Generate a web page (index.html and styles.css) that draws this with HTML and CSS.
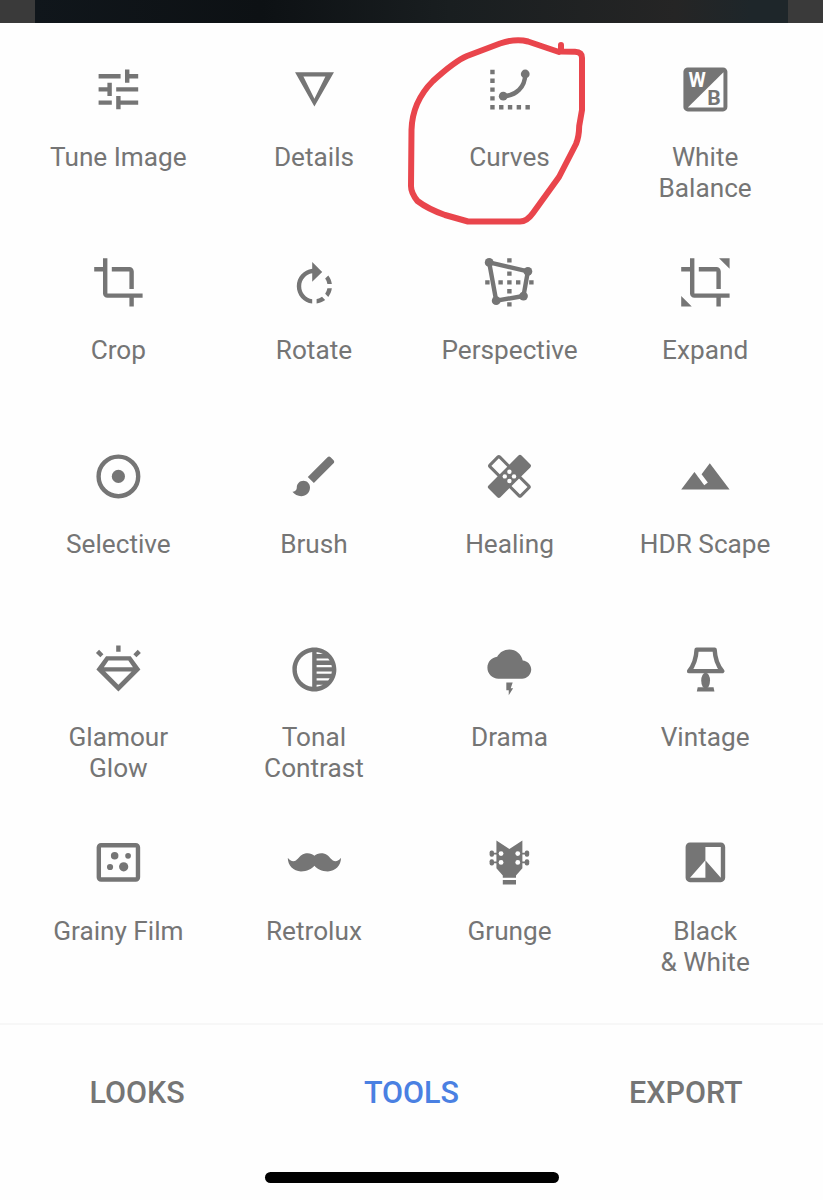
FILE: index.html
```
<!DOCTYPE html>
<html lang="en">
<head>
    <meta charset="UTF-8">
    <meta name="viewport" content="width=device-width, initial-scale=1.0">
    <title>Photo Editor - Tools</title>
    <link rel="stylesheet" href="styles.css">
</head>
<body>
    <div class="app">
        <div class="photo-strip"><div class="photo"></div></div>

        <div class="tools">
            <div class="tool">
                <svg class="icon" viewBox="0 0 24 24"><path d="M3 17v2h6v-2H3zM3 5v2h10V5H3zm10 16v-2h8v-2h-8v-2h-2v6h2zM7 9v2H3v2h4v2h2V9H7zm14 4v-2H11v2h10zm-6-4h2V7h4V5h-4V3h-2v6z"/></svg>
                <div class="label">Tune Image</div>
            </div>
            <div class="tool">
                <svg class="icon" viewBox="0 0 24 24"><path fill-rule="evenodd" d="M3.2 4.2h17.7L12 19.8zM7 6.1l5 10.1 5-10.1z"/></svg>
                <div class="label">Details</div>
            </div>
            <div class="tool">
                <svg class="icon" viewBox="0 0 24 24">
                    <path class="line dots" d="M4.3 3.1v18M7.3 20.1h15"/>
                    <path class="line" d="M9.2 15.1C15 14.9 19.2 11 19.2 5"/>
                    <circle cx="9.2" cy="15.1" r="2"/><circle cx="19.2" cy="5" r="2"/>
                </svg>
                <div class="label">Curves</div>
            </div>
            <div class="tool">
                <svg class="icon" viewBox="0 0 24 24">
                    <rect x="2" y="2" width="20" height="20" rx="2"/>
                    <path class="paper" d="M20.2 4.2v16H4z"/>
                    <text class="paper wb" x="8.2" y="10.9" font-size="9">W</text>
                    <text class="wb" x="15.9" y="19.1" font-size="9.6">B</text>
                </svg>
                <div class="label">White<br>Balance</div>
            </div>

            <div class="tool">
                <svg class="icon" viewBox="0 0 24 24"><path d="M17 15h2V7c0-1.1-.9-2-2-2H9v2h8v8zM7 17V1H5v4H1v2h4v10c0 1.1.9 2 2 2h10v4h2v-4h4v-2H7z"/></svg>
                <div class="label">Crop</div>
            </div>
            <div class="tool">
                <svg class="icon" viewBox="0 0 24 24"><path transform="translate(0 1.7)" d="M15.55 5.55L11 1v3.07C7.06 4.56 4 7.92 4 12s3.05 7.44 7 7.93v-2.02c-2.84-.48-5-2.94-5-5.91s2.16-5.43 5-5.91V10l4.55-4.45zM19.93 11c-.17-1.39-.72-2.73-1.62-3.89l-1.42 1.42c.54.75.88 1.6 1.02 2.47h2.02zM13 17.9v2.02c1.39-.17 2.74-.71 3.9-1.61l-1.44-1.44c-.75.54-1.59.89-2.46 1.03zm3.89-2.42l1.42 1.41c.9-1.16 1.45-2.5 1.62-3.89h-2.02c-.14.87-.48 1.72-1.02 2.48z"/></svg>
                <div class="label">Rotate</div>
            </div>
            <div class="tool">
                <svg class="icon" viewBox="0 0 24 24">
                    <path d="M11 1h2v2h-2zM11 7h2v2h-2zM11 11h2v2h-2zM11 15h2v2h-2zM11 21h2v2h-2zM1 11h2v2H1zM7 11h2v2H7zM15 11h2v2h-2zM21 11h2v2h-2z"/>
                    <path class="line" d="M2.8 2.9L20.4 7l-2 11.2L6 20.3z"/>
                    <circle cx="2.8" cy="2.9" r="2"/><circle cx="20.4" cy="7" r="2"/><circle cx="18.4" cy="18.2" r="2"/><circle cx="6" cy="20.3" r="2"/>
                </svg>
                <div class="label">Perspective</div>
            </div>
            <div class="tool">
                <svg class="icon" viewBox="0 0 24 24"><path d="M17 15h2V7c0-1.1-.9-2-2-2H9v2h8v8zM7 17V1H5v4H1v2h4v10c0 1.1.9 2 2 2h10v4h2v-4h4v-2H7zM18.2 1H23v4.8zM1 18.2V23h4.8z"/></svg>
                <div class="label">Expand</div>
            </div>

            <div class="tool">
                <svg class="icon" viewBox="0 0 24 24"><circle class="line" cx="12" cy="12" r="9"/><circle cx="12" cy="12" r="3"/></svg>
                <div class="label">Selective</div>
            </div>
            <div class="tool">
                <svg class="icon" viewBox="0 0 24 24"><path d="M7 14c-1.66 0-3 1.34-3 3 0 1.31-1.16 2-2 2 .92 1.22 2.49 2 4 2 2.21 0 4-1.79 4-4 0-1.66-1.34-3-3-3zm13.71-9.37l-1.34-1.34c-.39-.39-1.02-.39-1.41 0L9 12.25 11.75 15l8.96-8.96c.39-.39.39-1.02 0-1.41z"/></svg>
                <div class="label">Brush</div>
            </div>
            <div class="tool">
                <svg class="icon" viewBox="0 0 24 24">
                    <rect class="line thin" x="2.1" y="8.9" width="19.8" height="6.2" rx=".5" transform="rotate(45 12 12)"/>
                    <rect x="1.4" y="8.2" width="21.2" height="7.6" rx="1" transform="rotate(-45 12 12)"/>
                    <g class="paper"><circle cx="12" cy="9.9" r="1"/><circle cx="9.9" cy="12" r="1"/><circle cx="14.1" cy="12" r="1"/><circle cx="12" cy="14.1" r="1"/></g>
                </svg>
                <div class="label">Healing</div>
            </div>
            <div class="tool">
                <svg class="icon" viewBox="0 0 24 24"><path d="M14 6l-3.75 5 2.85 3.8-1.6 1.2C9.81 13.75 7 10 7 10l-6 8h22L14 6z"/></svg>
                <div class="label">HDR Scape</div>
            </div>

            <div class="tool">
                <svg class="icon" viewBox="0 0 24 24">
                    <path fill-rule="evenodd" d="M6.4 6h11.2L22 12 12 22 2 12zM7.5 8l-2.1 3h13.2l-2.1-3zM6 13l6 6 6-6z"/>
                    <path class="line" d="M12 1.1V4M2.5 3.8l2 2M21.5 3.8l-2 2"/>
                </svg>
                <div class="label">Glamour<br>Glow</div>
            </div>
            <div class="tool">
                <svg class="icon" viewBox="0 0 24 24"><path d="M12 2C6.48 2 2 6.48 2 12s4.48 10 10 10 10-4.48 10-10S17.52 2 12 2zm-1 17.93c-3.94-.49-7-3.85-7-7.93s3.05-7.44 7-7.93v15.86zm2-15.86c1.03.13 2 .45 2.87.93H13v-.93zM13 7h5.24c.25.31.48.65.68 1H13V7zm0 3h6.74c.08.33.15.66.19 1H13v-1zm0 9.93V19h2.87c-.87.48-1.84.8-2.87.93zM18.24 17H13v-1h5.92c-.2.35-.43.69-.68 1zm1.5-3H13v-1h6.93c-.04.34-.11.67-.19 1z"/></svg>
                <div class="label">Tonal<br>Contrast</div>
            </div>
            <div class="tool">
                <svg class="icon" viewBox="0 0 24 24">
                    <path transform="translate(2 -.4) scale(.83)" d="M19.35 10.04C18.67 6.59 15.64 4 12 4 9.11 4 6.6 5.64 5.35 8.04 2.34 8.36 0 10.91 0 14c0 3.31 2.69 6 6 6h13c2.76 0 5-2.24 5-5 0-2.64-2.05-4.78-4.65-4.96z"/>
                    <path d="M10.6 17.9h2.9l-.9 2.7h1.1l-2 3.1v-2.2h-1.1z"/>
                </svg>
                <div class="label">Drama</div>
            </div>
            <div class="tool">
                <svg class="icon" viewBox="0 0 24 24">
                    <path class="line round" d="M8 3h8.2c.2 4 1.3 7.2 3.5 9.8H4.6C6.7 10.2 7.8 7 8 3z"/>
                    <ellipse cx="12.1" cy="17.1" rx="2" ry="3.6"/>
                    <path d="M8.5 20.1h7.2l.4 1.9H8.1z"/>
                </svg>
                <div class="label">Vintage</div>
            </div>

            <div class="tool">
                <svg class="icon" viewBox="0 0 24 24">
                    <rect class="line" x="3.1" y="4.2" width="17.8" height="15.6" rx="1"/>
                    <circle cx="10.3" cy="9" r="1.7"/><circle cx="16.4" cy="9" r="1.3"/><circle cx="8.2" cy="14.1" r="1.4"/><circle cx="14.4" cy="14" r="2.1"/>
                </svg>
                <div class="label">Grainy Film</div>
            </div>
            <div class="tool">
                <svg class="icon" viewBox="0 0 24 24"><path d="M12 9C13.1 8 14.8 7.6 16.600 8.100c1.800.5 2.500 2.100 3.800 3 1.200.8 2.700.2 3.700-1.200 0 3.500-2.600 6.200-6 6.200-2.800 0-4.800-1.100-6.100-2.600-1.300 1.500-3.300 2.600-6.100 2.600-3.400 0-6-2.700-6-6.200 1 1.400 2.500 2 3.700 1.200 1.300-.9 2-2.500 3.800-3C9.200 7.600 10.900 8 12 9z"/></svg>
                <div class="label">Retrolux</div>
            </div>
            <div class="tool">
                <svg class="icon" viewBox="0 0 24 24">
                    <path d="M6.1 2L12 5.9 17.9 2v12.7L15 18v1H9v-1l-2.9-3.3zM9 20h6v2H9zM4 7.6h16v.8H4zM4 11.6h16v.8H4z"/>
                    <rect x="3" y="6.6" width="2" height="2.8" rx=".9"/><rect x="3" y="10.6" width="2" height="2.8" rx=".9"/>
                    <rect x="19" y="6.6" width="2" height="2.8" rx=".9"/><rect x="19" y="10.6" width="2" height="2.8" rx=".9"/>
                    <g class="paper"><circle cx="8.2" cy="8" r="1.1"/><circle cx="15.8" cy="8" r="1.1"/><circle cx="8.2" cy="12" r="1.1"/><circle cx="15.8" cy="12" r="1.1"/></g>
                </svg>
                <div class="label">Grunge</div>
            </div>
            <div class="tool">
                <svg class="icon" viewBox="0 0 24 24"><path d="M19 3H5c-1.1 0-2 .9-2 2v14c0 1.1.9 2 2 2h14c1.1 0 2-.9 2-2V5c0-1.1-.9-2-2-2zm0 16l-7-8v8H5l7-8V5h7v14z"/></svg>
                <div class="label">Black<br>&amp; White</div>
            </div>
        </div>

        <div class="tabs">
            <div class="tab">LOOKS</div>
            <div class="tab active">TOOLS</div>
            <div class="tab">EXPORT</div>
        </div>
        <div class="home-bar"></div>

        <!-- hand drawn ring around Curves -->
        <svg class="marker" viewBox="0 0 190 200">
            <path d="M159 32L128 21.5Q116 18 100 23.500L67 36Q55 41 33 61C18 76 12 92 11.5 110L11 166Q11 173 17.5 181Q28 189 45 195L68 201.5H120Q127 201.5 133 193L159 157L176 124Q179 117 179.2 106L182 90V38Q182 32 175 31.8L161 31.5V25"/>
        </svg>
    </div>
</body>
</html>
```
FILE: styles.css
```
body {
    margin: 0;
    background-color: #fefefe;
    font-family: Roboto, sans-serif;
    color: #757575;
    overflow: hidden;
}
.app {
    position: relative;
    display: flex;
    flex-direction: column;
    height: 1200px;
}
.photo-strip {
    box-sizing: border-box;
    height: 23px;
    padding: 0 35px;
    background-color: #3a3a3a;
}
.photo {
    height: 23px;
    background: linear-gradient(90deg, #10161b 0%, #0d1114 30%, #191e20 55%, #252525 85%, #1e262a 95%);
}
.tools {
    box-sizing: border-box;
    display: grid;
    grid-template-columns: repeat(4, 195.6px);
    grid-auto-rows: 193.4px;
    justify-content: center;
    height: 999.6px;
    padding-top: 39.8px;
    padding-left: 0.5px;
}
.tool {
    display: flex;
    flex-direction: column;
    align-items: center;
    gap: 26.5px;
}
.icon {
    width: 52.8px;
    height: 52.8px;
    flex: none;
    overflow: visible;
    fill: #757575;
}
.icon .line {
    fill: none;
    stroke: #757575;
    stroke-width: 2;
}
.icon .thin {
    stroke-width: 1.4;
}
.icon .round {
    stroke-linejoin: round;
}
.icon .dots {
    stroke-dasharray: 2 2;
}
.icon .paper {
    fill: #fefefe;
}
.wb {
    font-weight: 700;
    text-anchor: middle;
}
.label {
    font-size: 26.2px;
    line-height: 31px;
    text-align: center;
    white-space: nowrap;
}
.tabs {
    display: grid;
    grid-template-columns: repeat(3, 1fr);
    height: 137px;
    border-top: 2px solid #f7f7f7;
}
.tab {
    font-size: 30.5px;
    font-weight: 500;
    line-height: 136px;
    text-align: center;
}
.tab.active {
    color: #4a80e2;
}
.home-bar {
    width: 294px;
    height: 11px;
    margin: 10px auto 0;
    border-radius: 6px;
    background-color: #000;
}
.marker {
    position: absolute;
    left: 400px;
    top: 20px;
    width: 190px;
    height: 200px;
    overflow: visible;
    fill: none;
    stroke: #e9454c;
    stroke-width: 6;
    stroke-linecap: round;
    stroke-linejoin: round;
}
```
